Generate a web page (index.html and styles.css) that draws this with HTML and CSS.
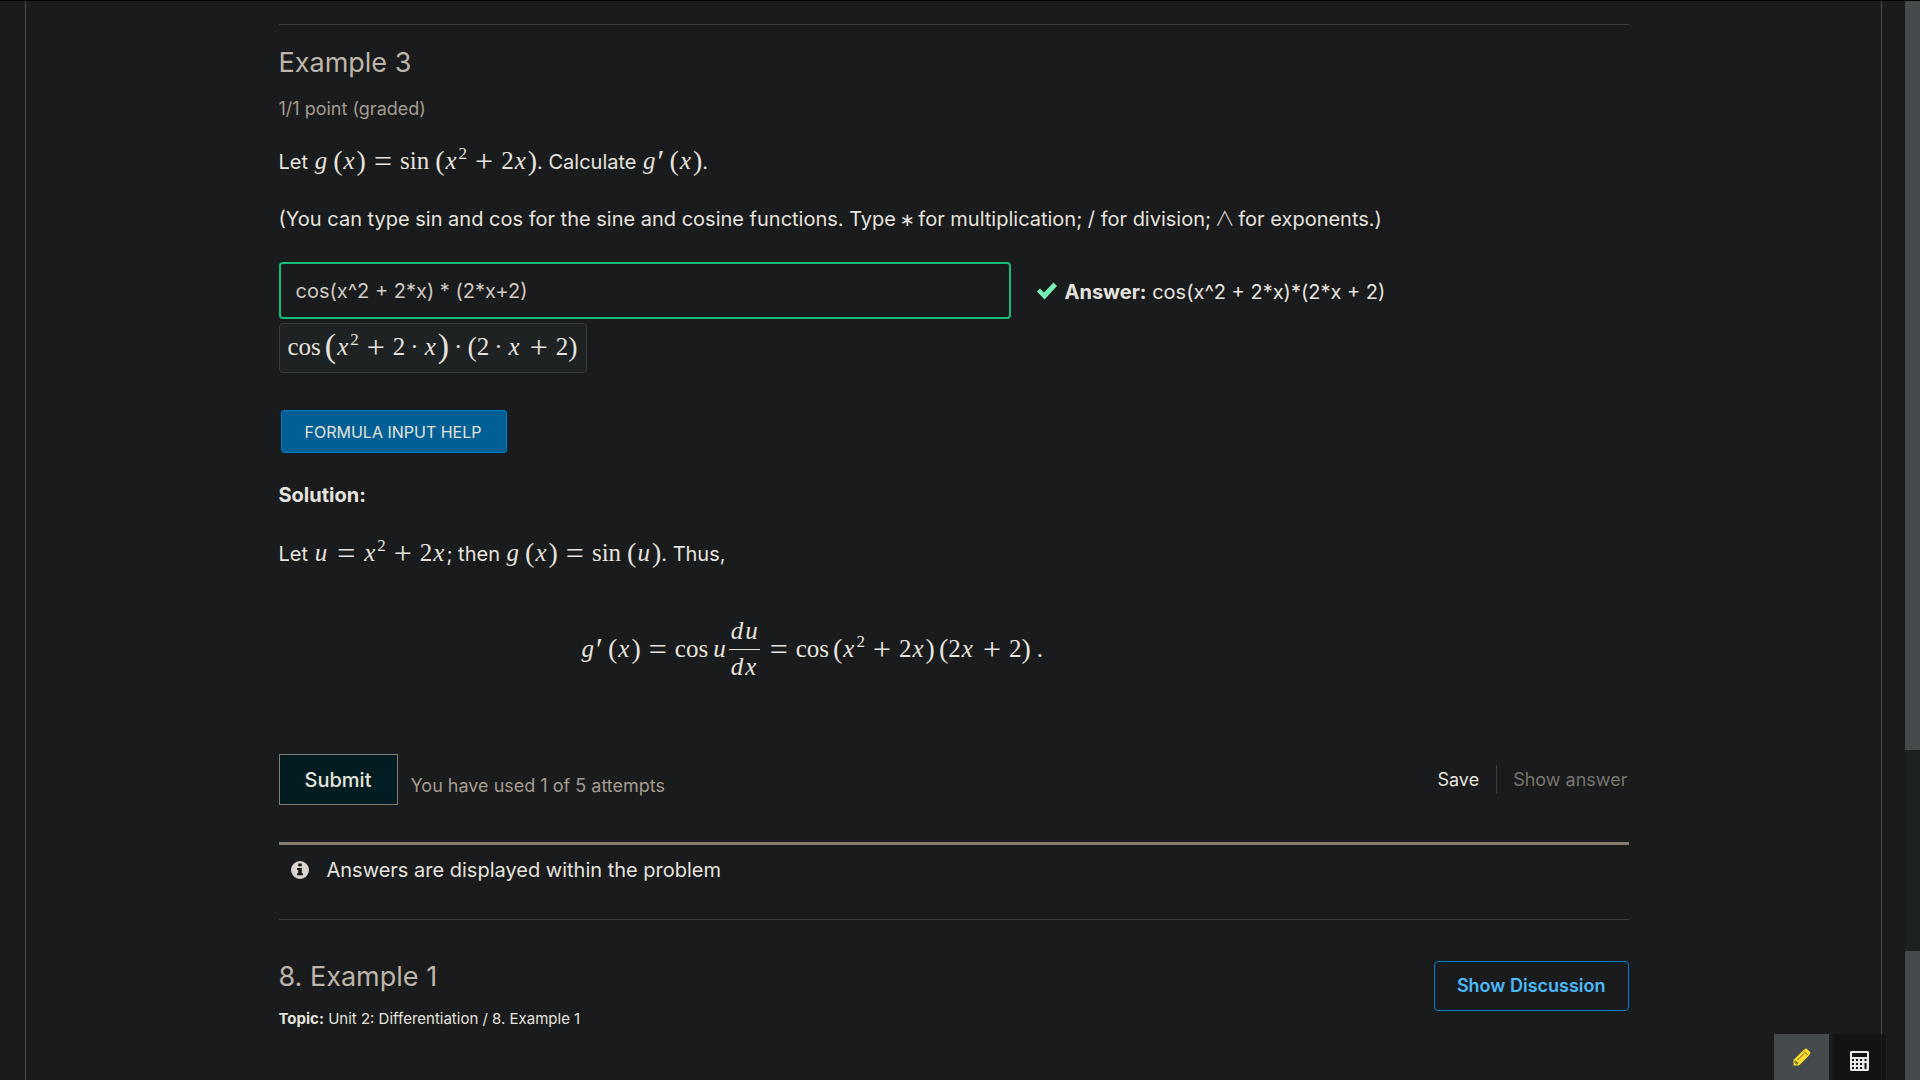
FILE: index.html
```html
<!DOCTYPE html>
<html lang="en">
<head>
<meta charset="utf-8">
<title>Example 3</title>
<link rel="stylesheet" href="styles.css">
</head>
<body>
<main class="frame">
  <div class="content">
    <section class="problem">
      <h2 class="title">Example 3</h2>
      <p class="points">1/1 point (graded)</p>
      <p class="line">Let <span class="math"><i>g</i><span class="par open">(</span><i>x</i><span class="par">)</span><span class="rel">=</span>sin<span class="par fn">(</span><i>x</i><sup>2</sup><span class="bin">+</span>2<i>x</i><span class="par">)</span></span>. Calculate <span class="math"><i>g</i><i class="prime">′</i><span class="par fn">(</span><i>x</i><span class="par">)</span></span>.</p>
      <p class="line hint">(You can type sin and cos for the sine and cosine functions. Type <span class="star">∗</span> for multiplication; / for division; <span class="wedge">∧</span> for exponents.)</p>
      <div class="answer-row">
        <input class="answer-input" type="text" aria-label="Your answer" value="cos(x^2 + 2*x) * (2*x+2)">
        <svg class="check" viewBox="0 0 22 20" aria-hidden="true"><path d="M1 10.500 4 7.500l4 4L17.500 1.500l3.500 3.500L8.500 18.500z"/></svg>
        <p class="answer"><strong>Answer:</strong> cos(x^2 + 2*x)*(2*x + 2)</p>
      </div>
      <div class="preview"><span class="math">cos<span class="par big open">(</span><i>x</i><sup>2</sup><span class="bin">+</span>2<span class="dot">·</span><i>x</i><span class="par big">)</span><span class="dot">·</span><span class="par">(</span>2<span class="dot">·</span><i>x</i><span class="bin">+</span>2<span class="par">)</span></span></div>
      <button class="help" type="button">FORMULA INPUT HELP</button>
      <p class="line solution"><strong>Solution:</strong></p>
      <p class="line">Let <span class="math"><i>u</i><span class="rel">=</span><i>x</i><sup>2</sup><span class="bin">+</span>2<i>x</i></span>; then <span class="math"><i>g</i><span class="par open">(</span><i>x</i><span class="par">)</span><span class="rel">=</span>sin<span class="par fn">(</span><i>u</i><span class="par">)</span></span>. Thus,</p>
      <div class="display">
        <span class="math"><i>g</i><i class="prime">′</i><span class="par fn">(</span><i>x</i><span class="par">)</span><span class="rel">=</span>cos<i class="arg">u</i></span>
        <span class="math frac"><span class="num"><i>d</i><i>u</i></span><span class="den"><i>d</i><i>x</i></span></span>
        <span class="math"><span class="rel">=</span>cos<span class="par open">(</span><i>x</i><sup>2</sup><span class="bin">+</span>2<i>x</i><span class="par">)</span><span class="par open">(</span>2<i>x</i><span class="bin">+</span>2<span class="par">)</span><span class="stop">.</span></span>
      </div>
      <div class="actions">
        <button class="submit" type="button">Submit</button>
        <p class="attempts">You have used 1 of 5 attempts</p>
        <button class="plain" type="button">Save</button>
        <button class="plain last" type="button" disabled>Show answer</button>
      </div>
      <div class="notice">
        <svg class="info" viewBox="0 0 18 18" aria-hidden="true"><circle cx="9" cy="9" r="9"/><path d="M7.200 2.500h3.600v2.700H7.200zM6 7h4.800v5.300H12v2H6v-2h1.200V9H6z"/></svg>
        <p>Answers are displayed within the problem</p>
      </div>
    </section>
    <section class="discussion">
      <div>
        <h2 class="title">8. Example 1</h2>
        <p class="topic"><strong>Topic:</strong> Unit 2: Differentiation / 8. Example 1</p>
      </div>
      <button class="show" type="button">Show Discussion</button>
    </section>
  </div>
</main>
<div class="scroll" aria-hidden="true"><div class="thumb first"></div><div class="thumb second"></div></div>
<div class="tools">
  <button class="tool notes" type="button" aria-label="Notes"><svg viewBox="0 0 18 18"><path class="lead" d="M.500 17.500V12L11 1.500 13.500.500 17.500 4.500 16.500 7 6 17.500z"/><path class="gap" d="M10.700 3.300 14.700 7.300M4.500 12 11 5.500M2 13.300h1.300v1.300h1.300v1.400H3.300L2 14.700z"/></svg></button>
  <button class="tool calc" type="button" aria-label="Calculator"><svg viewBox="0 0 19 20"><path fill-rule="evenodd" d="M1 0h17l1 1v18l-1 1H1l-1-1V1zM2 2v4h15V2zM2 8v2h2V8zM6 8v2h2V8zM10 8v2h2V8zM14.500 8v2h2V8zM2 12v2h2v-2zM6 12v2h2v-2zM10 12v2h2v-2zM14.500 12v6h2v-6zM2 16v2h2v-2zM6 16v2h2v-2zM10 16v2h2v-2z"/></svg></button>
</div>
</body>
</html>
```
FILE: styles.css
```css
* { box-sizing: border-box; }
body {
  margin: 0;
  height: 100vh;
  overflow: hidden;
  display: flex;
  border-top: 1px solid #000;
  background: #1a1b1d;
  color: #e6e3de;
  font: 20px/30px Inter, "Liberation Sans", sans-serif;
}
p, h2 { margin: 0; }
button, input { font: inherit; color: inherit; }
strong { font-weight: 700; }
.frame {
  flex: 1;
  margin: 0 23px 0 25px;
  border: solid #46494b;
  border-width: 0 1px;
}
.content { max-width: 1350px; margin: 0 auto; padding-top: 23px; }
.problem { border-top: 1px solid #3c3f41; padding-top: 20px; }
.title { font-size: 27px; line-height: 36px; font-weight: 400; color: #bdb5aa; }
.points { margin-top: 13px; font-size: 18px; color: #a39b8f; }
.line { height: 30px; margin-top: 28px; white-space: nowrap; }
.points + .line { margin-top: 22px; }
.math { font: 25px/30px "Liberation Serif", serif; white-space: nowrap; }
.math i { margin: 0 2px 0 1px; }
.math sup { font-size: 17px; line-height: 0; vertical-align: 10px; }
.par { font-size: 28px; line-height: 0; vertical-align: -1px; }
.big { font-size: 34px; vertical-align: -2px; }
.open { margin-left: 4px; }
.fn { margin-left: 6px; }
.rel, .bin { font-size: 32px; line-height: 0; vertical-align: -3px; }
.rel, .bin { margin: 0 8px; }
.dot { margin: 0 5px; }
.math .prime { margin: 0 1px 0 -2px; font-size: 32px; line-height: 0; vertical-align: -3px; }
.arg { padding-left: 4px; }
.stop { margin-left: 6px; }
.star { margin: 0 -2px; font-family: "DejaVu Sans", sans-serif; font-size: 18px; line-height: 0; }
.wedge { margin: 0 -2px; font-family: "Noto Sans CJK JP", sans-serif; font-weight: 300; line-height: 0; }
.answer-row { display: flex; align-items: center; margin-top: 28px; }
.answer-input {
  width: 732px;
  height: 57px;
  padding: 0 15px;
  border: 2px solid #16bd78;
  border-radius: 4px;
  background: #1a1b1d;
  color: #cfcac2;
}
.check { width: 22px; height: 20px; margin: 0 7px 0 25px; fill: #75f0b5; }
.answer { padding-top: 3px; white-space: nowrap; }
.preview {
  width: fit-content;
  height: 50px;
  margin-top: 4px;
  padding: 8px;
  border: 1px solid #363b3d;
  border-radius: 4px;
  background: #1f2223;
}
.preview .math { display: block; }
.help {
  display: block;
  height: 43px;
  margin: 37px 2px 0;
  padding: 0 24px 0 23px;
  border: 1px solid #007fc7;
  border-radius: 3px;
  background: #005f94;
  font-size: 16px;
}
.solution { margin-top: 27px; }
.display {
  display: flex;
  align-items: center;
  justify-content: center;
  width: 79%;
  height: 66px;
  margin-top: 48px;
}
.frac { display: flex; flex-direction: column; margin: 0 2px 0 1px; }
.num { border-bottom: 1px solid #e6e3de; padding: 0 1px 3px; }
.den { padding: 2px 1px 0; }
.frac i { margin: 0 1px; }
.actions { display: flex; align-items: center; margin-top: 72px; }
.submit {
  width: 119px;
  height: 51px;
  border: 1px solid #867c6d;
  background: #011d22;
  font-weight: 500;
}
.attempts { margin: 12px auto 0 13px; font-size: 18px; color: #a39b8f; }
.plain { height: 29px; padding: 0; border: 0; background: none; font-size: 18px; }
.last { margin-left: 17px; padding: 0 1px 0 16px; border-left: 1px solid #3c3f41; color: #78746e; }
.notice {
  display: flex;
  align-items: center;
  margin-top: 37px;
  padding: 10px 12px 34px;
  border-top: 3px solid #867c6d;
}
.info { width: 18px; height: 18px; margin-right: 18px; fill: #d9d5ce; }
.info path { fill: #1a1b1d; }
.discussion {
  display: flex;
  align-items: flex-start;
  justify-content: space-between;
  padding-top: 39px;
  border-top: 1px solid #3c3f41;
}
.topic { margin-top: 9px; font-size: 15px; }
.show {
  height: 50px;
  margin-top: 2px;
  padding: 0 22px;
  border: 1px solid #0080c8;
  border-radius: 4px;
  background: none;
  color: #4ab9f8;
  font-size: 18px;
  font-weight: 600;
}
.scroll { width: 15px; display: flex; flex-direction: column; justify-content: space-between; background: #1d2122; }
.thumb { background: #454a4d; }
.first { height: 69.4%; }
.second { height: 12%; }
.tools { position: fixed; right: 34px; bottom: 0; display: flex; gap: 4px; }
.tool { width: 53px; height: 46px; padding: 0; border: 0; display: flex; align-items: center; justify-content: center; }
.notes { width: 55px; background: #454a4d; }
.notes svg { width: 18px; height: 18px; }
.lead { fill: #fddb2c; }
.gap { fill: none; stroke: #5f5a2e; }
.calc { background: rgb(17 18 19 / 80%); padding-top: 8px; }
.calc svg { width: 19px; height: 20px; fill: #e8e6e3; }
```
